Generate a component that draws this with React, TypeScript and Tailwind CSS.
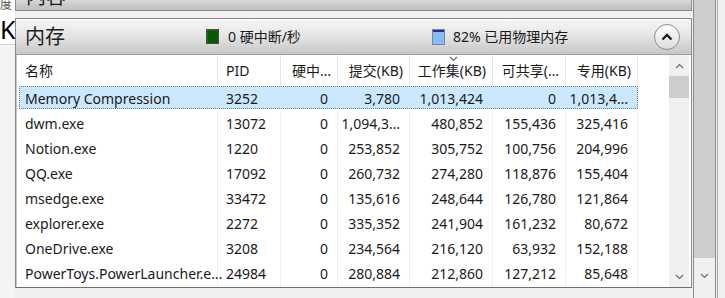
import React from 'react';

const font = { fontFamily: '"Segoe UI","Noto Sans","Noto Sans CJK SC",sans-serif' };

const cols = [
  { label: '名称', w: 'w-[201px]', align: 'left' },
  { label: 'PID', w: 'w-[63px]', align: 'left' },
  { label: '硬中…', w: 'w-[57px]', align: 'right' },
  { label: '提交(KB)', w: 'w-[72px]', align: 'right' },
  { label: '工作集(KB)', w: 'w-[83px]', align: 'right' },
  { label: '可共享(…', w: 'w-[73px]', align: 'right' },
  { label: '专用(KB)', w: 'w-[72px]', align: 'right' },
];

const rows = [
  ['Memory Compression', '3252', '0', '3,780', '1,013,424', '0', '1,013,4…'],
  ['dwm.exe', '13072', '0', '1,094,3…', '480,852', '155,436', '325,416'],
  ['Notion.exe', '1220', '0', '253,852', '305,752', '100,756', '204,996'],
  ['QQ.exe', '17092', '0', '260,732', '274,280', '118,876', '155,404'],
  ['msedge.exe', '33472', '0', '135,616', '248,644', '126,780', '121,864'],
  ['explorer.exe', '2272', '0', '335,352', '241,904', '161,232', '80,672'],
  ['OneDrive.exe', '3208', '0', '234,564', '216,120', '63,932', '152,188'],
  ['PowerToys.PowerLauncher.e…', '24984', '0', '280,884', '212,860', '127,212', '85,648'],
];

function Chevron({ up, className }: { up?: boolean; className?: string }) {
  return (
    <svg width="9" height="6" viewBox="0 0 9 6" className={className}>
      <path d={up ? 'M1 5 L4.5 1.5 L8 5' : 'M1 1 L4.5 4.5 L8 1'} fill="none" stroke="#6b6b6b" strokeWidth="1.2" />
    </svg>
  );
}

function HardFaultIcon() {
  return (
    <svg width="13" height="15" viewBox="0 0 13 15">
      <rect x="0.5" y="0.5" width="12" height="14" fill="#0b9a0b" stroke="#4a4a4a" />
      {[3, 5, 7, 9, 11].map((x) => (
        <line key={'v' + x} x1={x} y1="1" x2={x} y2="14" stroke="#033803" strokeWidth="0.8" />
      ))}
      {[3, 5, 7, 9, 11, 13].map((y) => (
        <line key={'h' + y} x1="1" y1={y} x2="12" y2={y} stroke="#033803" strokeWidth="0.8" />
      ))}
    </svg>
  );
}

function MemIcon() {
  return (
    <svg width="13" height="16" viewBox="0 0 13 16">
      <rect x="0.5" y="0.5" width="12" height="15" fill="#86bdf8" stroke="#7b8594" />
      <rect x="1" y="1" width="11" height="2" fill="#1b2fb0" />
    </svg>
  );
}

export default function App() {
  return (
    <div className="w-[725px] h-[298px] flex overflow-hidden bg-[#f0f0f0] text-[#1a1a1a]" style={font}>
      {/* left edge of the neighbouring pane */}
      <div className="w-[15px] flex flex-col shrink-0">
        <div className="h-[45px] bg-white border-b border-[#d4d4d4] overflow-hidden flex flex-col">
          <div className="text-[12px] leading-[12px] text-[#555] -mt-[1px]">度</div>
          <div className="text-[25px] leading-[28px] text-black mt-[4px]">K</div>
        </div>
        <div className="flex-1 bg-[#f4f4f4]" />
      </div>

      {/* resource monitor column */}
      <div className="w-[677px] shrink-0 flex flex-col">
        <div className="h-[11px] border-x border-b border-[#8c8c8c] bg-gradient-to-b from-[#d8d8d8] to-[#bdbdbd] overflow-hidden">
          <div className="pl-[10px] text-[20px] leading-[20px] -mt-[13px] text-[#222]">内容</div>
        </div>
        <div className="h-[7px]" />
        <div className="flex-1 flex flex-col border border-[#8a8a8a] border-b-[#6f6f6f] bg-white">
          {/* header */}
          <div className="h-[36px] shrink-0 flex items-center border-b border-[#9e9e9e] bg-gradient-to-b from-[#f7f7f7] via-[#e4e4e4] to-[#c6c6c6] shadow-[inset_0_1px_0_#ffffff]">
            <div className="w-[190px] pl-[9px] text-[20px] leading-[24px] text-[#1e1e1e]">内存</div>
            <div className="w-[226px] flex items-center gap-[9px] text-[14px]">
              <HardFaultIcon />
              <span>0 硬中断/秒</span>
            </div>
            <div className="flex-1 flex items-center gap-[8px] text-[14px]">
              <MemIcon />
              <span>82% 已用物理内存</span>
            </div>
            <div className="w-[26px] h-[26px] mr-[11px] rounded-full border border-[#8e8e8e] bg-gradient-to-b from-[#ffffff] to-[#dcdcdc] flex items-center justify-center">
              <svg width="12" height="8" viewBox="0 0 12 8">
                <path d="M1.5 6.5 L6 2 L10.5 6.5" fill="none" stroke="#1e1e1e" strokeWidth="2.4" />
              </svg>
            </div>
          </div>

          {/* table */}
          <div className="flex-1 flex overflow-hidden border-l border-[#c8c8c8]">
            <div className="w-[652px] shrink-0 flex flex-col">
              <div className="h-[31px] shrink-0 flex relative text-[14px]">
                {cols.map((c) => (
                  <div
                    key={c.label}
                    className={`${c.w} shrink-0 flex items-center border-r border-[#e5e5e5] ${c.align === 'left' ? 'pl-[8px]' : 'justify-end pr-[6px]'}`}
                  >
                    {c.label}
                  </div>
                ))}
                <Chevron className="absolute left-[432px] top-[1px]" />
              </div>
              {rows.map((r, i) => (
                <div key={r[0]} className="h-[25px] shrink-0 flex text-[14px] relative">
                  {i === 0 && (
                    <div className="absolute left-[2px] top-0 w-[619px] h-[23px] bg-[#cce8ff] border border-dotted border-[#5f7f9f]" />
                  )}
                  {r.map((v, j) => (
                    <div
                      key={j}
                      className={`${cols[j].w} shrink-0 relative flex items-center whitespace-nowrap border-r ${i === 0 ? 'border-transparent' : 'border-[#ecf0f5]'} ${j < 2 ? 'pl-[8px]' : 'justify-end pr-[9px]'}`}
                    >
                      {v}
                    </div>
                  ))}
                </div>
              ))}
              <div className="flex-1 flex">
                {cols.map((c) => (
                  <div key={c.label} className={`${c.w} shrink-0 border-r border-[#ecf0f5]`} />
                ))}
              </div>
            </div>
            {/* inner scrollbar */}
            <div className="w-[20px] shrink-0 flex flex-col bg-[#f0f0f0]">
              <div className="h-[21px] flex items-center justify-center">
                <Chevron up />
              </div>
              <div className="h-[22px] bg-[#cdcdcd]" />
              <div className="flex-1" />
              <div className="h-[21px] flex items-center justify-center">
                <Chevron />
              </div>
            </div>
          </div>
        </div>
        <div className="h-[10px]" />
      </div>

      {/* outer scrollbar */}
      <div className="w-[1px] shrink-0 bg-[#f0f0f0]" />
      <div className="w-[23px] shrink-0 flex flex-col border-x border-[#8c8c8c] bg-[#f0f0f0]">
        <div className="h-[258px] bg-[#cdcdcd]" />
        <div className="flex-1 flex items-start justify-center pt-[15px]">
          <Chevron />
        </div>
      </div>
      <div className="w-[1px] shrink-0" />
      <div className="flex-1 bg-[#f0f0f0] border-l border-[#a8a8a8]" />
    </div>
  );
}
